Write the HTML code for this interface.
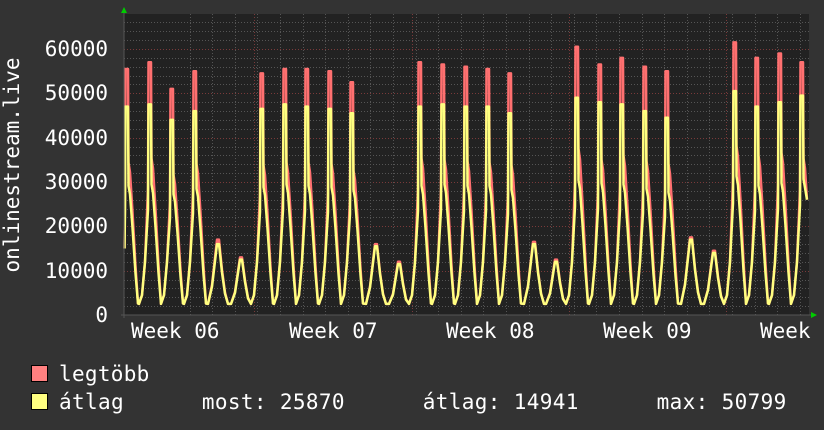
<!DOCTYPE html>
<html><head><meta charset="utf-8"><style>
html,body{margin:0;padding:0;background:#333;}
body{width:824px;height:430px;overflow:hidden;position:relative;font-family:"DejaVu Sans Mono","Liberation Mono",monospace;}
svg{position:absolute;left:0;top:0;}
text{font-family:"DejaVu Sans Mono","Liberation Mono",monospace;font-size:21px;fill:#fff;}
</style></head><body>
<svg id="g" width="824" height="430" xmlns="http://www.w3.org/2000/svg">
<rect x="124" y="14" width="685" height="301" fill="#222"/>
<g id="grid"></g>
<g id="data"></g>
<line x1="124" y1="12" x2="124" y2="318" stroke="#555" stroke-width="1"/>
<line x1="121" y1="315" x2="812" y2="315" stroke="#555" stroke-width="1"/>
<polygon points="121,13 127,13 124,7" fill="#0c0"/>
<polygon points="811,312 811,318 817,315" fill="#0c0"/>
<g text-anchor="end">
<text x="108" y="56">60000</text>
<text x="108" y="100">50000</text>
<text x="108" y="145">40000</text>
<text x="108" y="189">30000</text>
<text x="108" y="233">20000</text>
<text x="108" y="278">10000</text>
<text x="108" y="322">0</text>
</g>
<text x="0" y="0" transform="translate(19,165) rotate(-90)" text-anchor="middle">onlinestream.live</text>
<text x="131" y="338">Week 06</text>
<text x="289" y="338">Week 07</text>
<text x="446" y="338">Week 08</text>
<text x="603" y="338">Week 09</text>
<text x="760" y="338">Week</text>
<rect x="31.5" y="365.5" width="16" height="16" fill="#ff8080" stroke="#000"/>
<rect x="31.5" y="393.5" width="16" height="16" fill="#ffff80" stroke="#000"/>
<text x="59" y="381" letter-spacing="0.3">legtöbb</text>
<text x="59" y="409" xml:space="preserve" letter-spacing="0.35">átlag      most: 25870      átlag: 14941      max: 50799</text>
</svg>
<script>
(function(){
var NS="http://www.w3.org/2000/svg";
var grid=document.getElementById("grid"),data=document.getElementById("data");
function ln(x1,y1,x2,y2,c,d){var l=document.createElementNS(NS,"line");l.setAttribute("x1",x1);l.setAttribute("y1",y1);l.setAttribute("x2",x2);l.setAttribute("y2",y2);l.setAttribute("stroke",c);l.setAttribute("stroke-width",1);if(d)l.setAttribute("stroke-dasharray",d);grid.appendChild(l);}
function Y(v){return 315-v*44.33/10000;}
for(var v=2000;v<=66000;v+=2000){var y=Math.round(Y(v))+0.5;if(y<14)break;ln(124,y,809,y,v%10000==0?"#7a3a3a":"#555","1,2");}
for(var x=124+22.6*2.9;x<809;x+=22.6){var xx=Math.round(x)+0.5;ln(xx,14,xx,315,"#555","1,2");}
[254,412,569,726].forEach(function(x){ln(x+0.5,14,x+0.5,315,"#7a3a3a","1,2");});
var pk=[[127,55.5,47],[150,57,47.5],[172,51,44],[195,55,46],[218,17,16],[241,13,12.5],[262,54.5,46.5],[285,55.5,47.5],[307,55.5,47],[330,55,46.5],[352,52.5,45.5],[376,16,15.5],[399,12,11.5],[420,57,47],[443,56.5,47.5],[466,56,47],[488,55.5,47],[510,54.5,45.5],[534,16.5,16],[556,12.5,12],[577,60.5,49],[600,56.5,48],[622,58,47.5],[645,56,46],[667,55,44.5],[691,17.5,17],[714,14.5,14],[735,61.5,50.5],[757,58,47],[780,59,48],[802,57,49.5]];
function build(idx){
 var pts=[];
 pk.forEach(function(p){
  var c=p[0],P=p[idx]*1000,big=p[1]>30;
  if(big){
   pts.push([c-11,2500],[c-8,4500],[c-5,12000],[c-2,0.5*P],[c-1.5,P],[c+1,P],[c+1.5,0.62*P],[c+3,0.58*P],[c+5.5,0.42*P],[c+8.5,0.2*P],[c+11,2600]);
  } else {
   pts.push([c-10,2500],[c-6,0.4*P],[c-1,P],[c+1,P],[c+4,0.6*P],[c+7,0.3*P],[c+10,2500]);
  }
 });
 var s="";
 pts.forEach(function(q){var x=q[0];if(x<124.5||x>805)return;s+="L"+x.toFixed(1)+","+Y(q[1]).toFixed(1);});
 s+="L807,"+Y(26000).toFixed(1);
 s="M124.5,"+Y(15000).toFixed(1)+s;
 return s;
}
function path(d,c,w){var p=document.createElementNS(NS,"path");p.setAttribute("d",d);p.setAttribute("fill","none");p.setAttribute("stroke",c);p.setAttribute("stroke-width",w);p.setAttribute("stroke-linejoin","round");data.appendChild(p);}
path(build(1),"#ff7070",2.5);
path(build(2),"#ffff80",2.5);
})();
</script>
</body></html>
